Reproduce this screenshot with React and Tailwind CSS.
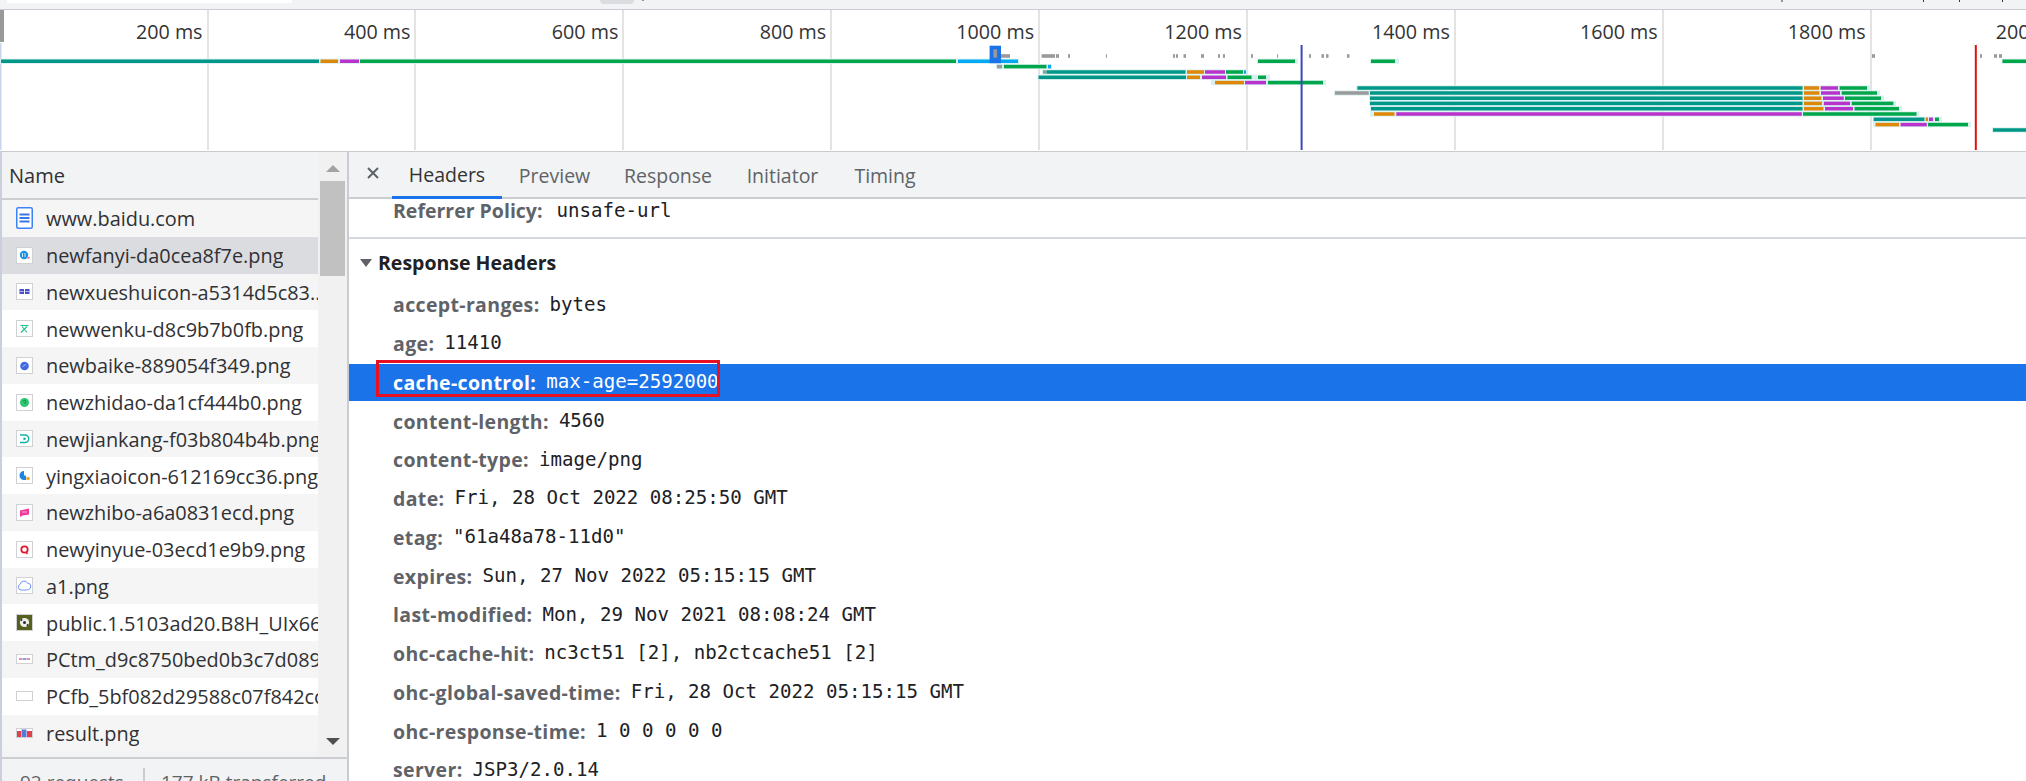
const TEAL = '#009688';
const ORANGE = '#de8709';
const PURPLE = '#b733cc';
const GREEN = '#00a74a';
const BLUE = '#03a9f4';
const GRAY = '#9a9a9a';

const timeLabels = ['200 ms', '400 ms', '600 ms', '800 ms', '1000 ms', '1200 ms', '1400 ms', '1600 ms', '1800 ms', '2000 ms'];

// start, end, colour per waterfall segment
const waterfall = [
  [61.25, [[1, 319, TEAL], [320.5, 338, ORANGE], [340, 359, PURPLE], [360, 956, GREEN], [958, 1018, BLUE]]],
  [61.25, [[1258, 1295, GREEN]], 1297],
  [61.25, [[1371, 1395, GREEN]], 1398],
  [61.25, [[2002.5, 2026, GREEN]]],
  [66.6, [[997, 1002, GRAY], [1004, 1046.5, GREEN], [1048, 1051, BLUE]]],
  [72, [[1043, 1046, GRAY], [1046.4, 1185.5, TEAL], [1187, 1204, ORANGE], [1205, 1225, PURPLE], [1226, 1243, GREEN], [1244, 1246, BLUE]]],
  [77.3, [[1038.5, 1186, TEAL], [1187, 1200, ORANGE], [1202, 1226, PURPLE], [1227.5, 1251.6, GREEN], [1258, 1266, GREEN]], 1269],
  [82.6, [[1215, 1244, ORANGE], [1245, 1266, PURPLE], [1268, 1323, GREEN]], 1325, 1212],
  [88, [[1357.4, 1802.5, TEAL], [1804, 1819, ORANGE], [1820.7, 1838, PURPLE], [1839.6, 1867, GREEN]], 1870],
  [93, [[1335, 1368.7, GRAY], [1370, 1802.5, TEAL], [1804, 1819.3, ORANGE], [1821, 1840, PURPLE], [1841.7, 1877, GREEN]], 1879],
  [98.2, [[1370, 1802.5, TEAL], [1804, 1821.4, ORANGE], [1823, 1843.8, PURPLE], [1845, 1881, GREEN]], 1883],
  [103.4, [[1370, 1802.5, TEAL], [1804, 1822, ORANGE], [1823.8, 1850, PURPLE], [1851.7, 1893.4, GREEN]], 1895],
  [108.7, [[1371, 1802.5, TEAL], [1804, 1823.5, ORANGE], [1825, 1853, PURPLE], [1854.5, 1899, GREEN]], 1901],
  [114, [[1374, 1394.5, ORANGE], [1396.3, 1801.8, PURPLE], [1803, 1916.5, GREEN]], 1918.5, 1371],
  [119.3, [[1873.7, 1924.4, TEAL], [1925.7, 1928, ORANGE], [1929, 1933, PURPLE], [1935, 1939, GREEN]], 1941],
  [124.6, [[1875.5, 1899, ORANGE], [1900.6, 1926.8, PURPLE], [1928, 1968, GREEN]], 1970, 1874],
  [130, [[1993, 2026, TEAL]]],
];

// small grey ticks on the first waterfall row
const ticks = [
  [1001, 1010], [1041.6, 1055], [1056, 1059], [1068, 1070], [1106, 1107], [1173, 1175], [1176, 1178], [1183.5, 1186],
  [1201, 1204], [1218, 1220], [1223, 1225], [1251, 1253], [1277, 1278], [1309, 1311], [1321.5, 1324], [1326, 1328.5],
  [1347, 1349.5], [1872, 1875], [1980, 1982], [1994, 1997], [1999, 2002],
];

const files = [
  ['doc', 'www.baidu.com'],
  ['fanyi', 'newfanyi-da0cea8f7e.png'],
  ['xueshu', 'newxueshuicon-a5314d5c83..'],
  ['wenku', 'newwenku-d8c9b7b0fb.png'],
  ['baike', 'newbaike-889054f349.png'],
  ['zhidao', 'newzhidao-da1cf444b0.png'],
  ['jiankang', 'newjiankang-f03b804b4b.png'],
  ['yingxiao', 'yingxiaoicon-612169cc36.png'],
  ['zhibo', 'newzhibo-a6a0831ecd.png'],
  ['yinyue', 'newyinyue-03ecd1e9b9.png'],
  ['a1', 'a1.png'],
  ['public', 'public.1.5103ad20.B8H_UIx66j.png'],
  ['pctm', 'PCtm_d9c8750bed0b3c7d089fa7d55720d6cf.png'],
  ['pcfb', 'PCfb_5bf082d29588c07f842ccde3f97243ea.png'],
  ['result', 'result.png'],
];

const responseHeaders = [
  ['accept-ranges', 'bytes'],
  ['age', '11410'],
  ['cache-control', 'max-age=2592000'],
  ['content-length', '4560'],
  ['content-type', 'image/png'],
  ['date', 'Fri, 28 Oct 2022 08:25:50 GMT'],
  ['etag', '"61a48a78-11d0"'],
  ['expires', 'Sun, 27 Nov 2022 05:15:15 GMT'],
  ['last-modified', 'Mon, 29 Nov 2021 08:08:24 GMT'],
  ['ohc-cache-hit', 'nc3ct51 [2], nb2ctcache51 [2]'],
  ['ohc-global-saved-time', 'Fri, 28 Oct 2022 05:15:15 GMT'],
  ['ohc-response-time', '1 0 0 0 0 0'],
  ['server', 'JSP3/2.0.14'],
];

function Waterfall() {
  return (
    <svg className="absolute left-0 top-0" width="2026" height="140" viewBox="0 10 2026 140">
      {/* overview resize handle */}
      <rect x="0" y="10" width="4" height="32" fill="#999" />
      <rect x="0" y="43" width="1.5" height="107" fill="#c9d5ea" />
      {waterfall.map(([y, segs, haloEnd, haloStart], i) => (
        <g key={i}>
          <rect
            x={(haloStart ?? segs[0][0]) - 1}
            y={y - 2.6}
            width={(haloEnd ?? segs[segs.length - 1][1]) - (haloStart ?? segs[0][0]) + 2}
            height="5.2"
            fill="#d8f0ef"
          />
          {segs.map(([a, b, color], j) => (
            <rect key={j} x={a} y={y - 1.75} width={b - a} height="3.5" fill={color} />
          ))}
        </g>
      ))}
      {ticks.map(([a, b], i) => (
        <rect key={i} x={a} y="54.2" width={b - a} height="3.6" fill={GRAY} />
      ))}
      {/* selected request marker */}
      <rect x="989.6" y="45.7" width="11.4" height="17.5" fill="#1a73e8" />
      <rect x="993.4" y="49.3" width="3.6" height="8.4" fill="#999" />
      {/* DOMContentLoaded and load lines */}
      <rect x="1300.6" y="45" width="2" height="105" fill="#3f46b8" />
      <rect x="1974.8" y="45" width="2" height="105" fill="#e01010" />
    </svg>
  );
}

function ThumbBox({ children, short }) {
  return (
    <svg width="17" height={short ? 10 : 17} viewBox={short ? '0 0 17 10' : '0 0 17 17'} className="shrink-0">
      <rect x="0.5" y="0.5" width="16" height={short ? 9 : 16} fill="#fff" stroke="#cfd1d4" />
      {children}
    </svg>
  );
}

function FileIcon({ kind }) {
  if (kind === 'doc') {
    return (
      <svg width="17" height="22" viewBox="0 0 17 22" className="shrink-0">
        <rect x="0.75" y="0.75" width="15.5" height="20.5" rx="1.5" fill="#fff" stroke="#3b82f6" strokeWidth="1.5" />
        <path d="M3.5 7.5h10M3.5 11h10M3.5 14.5h10" stroke="#3b78e7" strokeWidth="2" />
      </svg>
    );
  }
  if (kind === 'fanyi') {
    return (
      <ThumbBox>
        <circle cx="8" cy="8" r="4.2" fill="#1a8fe3" />
        <path d="M6.5 6v4M9 6v4" stroke="#fff" strokeWidth="0.8" />
        <path d="M11.5 11.5l2-1.5" stroke="#e5556a" strokeWidth="1.2" />
      </ThumbBox>
    );
  }
  if (kind === 'xueshu') {
    return (
      <ThumbBox>
        <rect x="3.5" y="6" width="4.5" height="5" fill="#4a4fd0" />
        <rect x="9" y="6" width="4.5" height="5" fill="#4a4fd0" />
        <path d="M4 8.5h3.5M9.5 8.5h3.5" stroke="#c9cbf5" strokeWidth="0.8" />
      </ThumbBox>
    );
  }
  if (kind === 'wenku') {
    return (
      <ThumbBox>
        <path d="M4.5 5.5h8M6 6.5l5 6M11 6.5l-6 6" stroke="#22c08a" strokeWidth="1.1" fill="none" />
      </ThumbBox>
    );
  }
  if (kind === 'baike') {
    return (
      <ThumbBox>
        <circle cx="8.5" cy="9" r="4.3" fill="#4169e1" />
        <path d="M6.5 9.5l3.5-2" stroke="#a9bbf5" strokeWidth="1" />
      </ThumbBox>
    );
  }
  if (kind === 'zhidao') {
    return (
      <ThumbBox>
        <circle cx="8.5" cy="8.5" r="4.5" fill="#2ec66e" />
        <path d="M7.3 7.5a1.3 1.3 0 1 1 1.6 1.3v1" stroke="#0f7a3e" strokeWidth="0.8" fill="none" />
      </ThumbBox>
    );
  }
  if (kind === 'jiankang') {
    return (
      <ThumbBox>
        <path d="M4 5h5a3.6 3.6 0 0 1 0 7.5H4" stroke="#10b3a8" strokeWidth="1.4" fill="none" />
        <circle cx="8.5" cy="8.7" r="1.3" fill="#10b3a8" />
      </ThumbBox>
    );
  }
  if (kind === 'yingxiao') {
    return (
      <ThumbBox>
        <path d="M8 4a4.5 4.5 0 1 0 0 9h2V8.5H8z" fill="#1a86e0" />
        <circle cx="12" cy="11.5" r="1.8" fill="#f4a62a" />
      </ThumbBox>
    );
  }
  if (kind === 'zhibo') {
    return (
      <ThumbBox>
        <path d="M4 6.5l9-2v6l-6.5 1L4 13z" fill="#f0379a" />
        <path d="M6 8h5" stroke="#fbc4e0" strokeWidth="0.8" />
      </ThumbBox>
    );
  }
  if (kind === 'yinyue') {
    return (
      <ThumbBox>
        <circle cx="8.5" cy="8.5" r="3.2" fill="none" stroke="#e01b2f" strokeWidth="1.8" />
        <path d="M10 11l1.5 2" stroke="#e01b2f" strokeWidth="1.4" />
      </ThumbBox>
    );
  }
  if (kind === 'a1') {
    return (
      <ThumbBox>
        <path d="M5 13a3 3 0 0 1-.8-5.8A4 4 0 0 1 11.5 6a3.4 3.4 0 0 1 1 6.6c-2.5.8-5 .4-7.5.4z" fill="none" stroke="#5b86f0" strokeWidth="0.9" />
      </ThumbBox>
    );
  }
  if (kind === 'public') {
    return (
      <ThumbBox>
        <rect x="1" y="1" width="15" height="15" fill="#55601c" />
        <circle cx="8.5" cy="8.5" r="4.6" fill="#eeeeea" />
        <circle cx="8.5" cy="8.5" r="1.5" fill="#2c2c2c" />
        <circle cx="5.5" cy="6" r="0.9" fill="#2c2c2c" />
        <circle cx="11.5" cy="11" r="0.9" fill="#2c2c2c" />
      </ThumbBox>
    );
  }
  if (kind === 'pctm') {
    return (
      <ThumbBox short>
        <path d="M3 5h3" stroke="#d9455a" strokeWidth="1.2" />
        <path d="M6.5 5h4" stroke="#4158c9" strokeWidth="1.2" />
        <path d="M11 5h3" stroke="#d9455a" strokeWidth="1.2" />
      </ThumbBox>
    );
  }
  if (kind === 'pcfb') {
    return <ThumbBox short />;
  }
  return (
    <ThumbBox short>
      <rect x="1" y="3" width="4" height="6" fill="#e0404a" />
      <rect x="5.5" y="1.5" width="5" height="7.5" fill="#5a78d8" />
      <rect x="11" y="3" width="5" height="6" fill="#e0404a" />
    </ThumbBox>
  );
}

function FileRow({ kind, name, index }) {
  const selected = index === 1;
  const bg = selected ? 'bg-[#dadce0]' : index % 2 === 0 ? 'bg-[#f5f5f5]' : 'bg-white';
  return (
    <div className={`flex h-[36.75px] items-center pl-[14px] ${bg}`}>
      <span className="flex w-[30px] shrink-0 items-center"><FileIcon kind={kind} /></span>
      <span className="min-w-0 overflow-hidden whitespace-nowrap pt-[2px] text-[19.9px] text-[#303134]">{name}</span>
    </div>
  );
}

function HeaderRow({ name, value, highlighted }) {
  return (
    <div className={`mb-[2px] flex h-[36.75px] items-center pl-[44px] ${highlighted ? 'bg-[#1a73e8]' : ''}`}>
      <span className={`text-[19.5px] font-bold tracking-[0.35px] ${highlighted ? 'text-white' : 'text-[#5f6368]'}`}>{name}:</span>
      <span className={`ml-[10px] whitespace-pre font-['DejaVu_Sans_Mono',monospace] text-[19.1px] ${highlighted ? 'text-white' : 'text-[#202124]'}`}>{value}</span>
    </div>
  );
}

export default function App() {
  return (
    <div className="flex h-[781px] w-[2026px] flex-col overflow-hidden bg-white font-['Open_Sans',sans-serif] text-[20px]">
      {/* Strip of the toolbar above */}
      <div className="relative h-[9px] shrink-0 bg-[#f1f3f4]">
        <div className="ml-[7px] h-[3px] w-[285px] bg-white" />
        <div className="absolute left-[600px] top-0 h-[4px] w-[34px] rounded-b-[6px] bg-[#dadce0]" />
        <svg className="absolute left-0 top-0" width="2026" height="3">
          <path d="M1782 0v2M1923.5 0v2M1959.5 0v2M2002.5 0v2M643 0v1" stroke="#333" strokeWidth="1" />
        </svg>
      </div>

      {/* Overview */}
      <div className="relative h-[143px] shrink-0 overflow-hidden border-y-[1px] border-t-[#c8ccd0] border-b-[#c8ccd0] bg-white">
        <div className="flex h-[140px]">
          {timeLabels.map((label, i) => (
            <div
              key={label}
              className={`flex h-full shrink-0 justify-end border-r-2 border-[#e3e3e3] pr-[4px] pt-[7px] ${i === 0 ? 'w-[208.5px]' : 'w-[207.9px]'}`}
            >
              <span className="whitespace-nowrap text-[19.7px] leading-[30px] text-[#333]">{label}</span>
            </div>
          ))}
        </div>
        <Waterfall />
      </div>

      <div className="flex min-h-0 flex-1">
        {/* Request list */}
        <div className="flex w-[349px] shrink-0 flex-col border-x-2 border-l-[#c9d0dc] border-r-[#c9cdd2] bg-[#f1f3f4]">
          <div className="flex min-h-0 flex-1">
            <div className="w-[316px] shrink-0 overflow-hidden">
              <div className="flex h-[48px] items-center border-b-2 border-[#cbcdd1] pl-[7px] pt-[2px] text-[20px] text-[#303134]">Name</div>
              {files.map(([kind, name], i) => (
                <FileRow key={name} kind={kind} name={name} index={i} />
              ))}
            </div>
            <div className="flex w-[29px] shrink-0 flex-col items-center bg-[#f1f1f1]">
              <div className="mt-[13px] h-0 w-0 border-x-[7px] border-b-[7px] border-x-transparent border-b-[#a3a3a3]" />
              <div className="mt-[9px] h-[95px] w-[25px] bg-[#c1c1c1]" />
              <div className="mt-auto mb-[12px] h-0 w-0 border-x-[7px] border-t-[7px] border-x-transparent border-t-[#505050]" />
            </div>
          </div>
          <div className="flex h-[24px] shrink-0 items-start border-t-2 border-[#cbcdd1]">
            <span className="mt-[10px] w-[141px] whitespace-nowrap pl-[18px] text-[19px] leading-[26px] text-[#5f6368]">92 requests</span>
            <span className="mt-[9px] h-[20px] w-[2px] bg-[#cbcdd1]" />
            <span className="mt-[10px] whitespace-nowrap pl-[16px] text-[19px] leading-[26px] text-[#5f6368]">177 kB transferred</span>
          </div>
        </div>

        {/* Detail pane */}
        <div className="min-w-0 flex-1 overflow-hidden">
          <div className="flex h-[47px] items-stretch border-b-2 border-[#cbcdd1] bg-[#f1f3f4] text-[19.5px]">
            <span className="flex w-[43px] items-center justify-center pb-[3px] pl-[5px]">
              <svg width="12" height="12" viewBox="0 0 12 12"><path d="M1 1l10 10M11 1L1 11" stroke="#5f6368" strokeWidth="2" /></svg>
            </span>
            <span className="-mb-[2px] flex w-[110px] items-center justify-center border-b-[3px] border-[#1a73e8] pt-[2px] text-[#333]">Headers</span>
            <span className="flex w-[105px] items-center justify-center pt-[2px] text-[#5f6368]">Preview</span>
            <span className="flex w-[122px] items-center justify-center pt-[2px] text-[#5f6368]">Response</span>
            <span className="flex w-[107px] items-center justify-center pt-[2px] text-[#5f6368]">Initiator</span>
            <span className="flex w-[98px] items-center justify-center pt-[2px] text-[#5f6368]">Timing</span>
          </div>

          <div className="relative">
            <div className="flex h-[25px] items-start pl-[44px]">
              <span className="-mt-[2px] text-[19.5px] font-bold leading-[28px] text-[#5f6368]">Referrer Policy:</span>
              <span className="-mt-[1px] ml-[14px] font-['DejaVu_Sans_Mono',monospace] text-[19.1px] leading-[26px] text-[#202124]">unsafe-url</span>
            </div>
            <div className="mt-[13px] h-[2px] bg-[#d5d8dc]" />
            <div className="flex h-[47.5px] items-center gap-[6px] pl-[11px]">
              <span className="h-0 w-0 border-x-[6px] border-t-[8px] border-x-transparent border-t-[#5f6368]" />
              <span className="text-[19.5px] font-bold text-[#202124]">Response Headers</span>
            </div>
            {responseHeaders.map(([name, value]) => (
              <HeaderRow key={name} name={name} value={value} highlighted={name === 'cache-control'} />
            ))}
            {/* annotation drawn on the original screenshot */}
            <div className="absolute left-[27px] top-[161px] h-[37px] w-[344px] border-[3px] border-[#e81123]" />
          </div>
        </div>
      </div>
    </div>
  );
}
